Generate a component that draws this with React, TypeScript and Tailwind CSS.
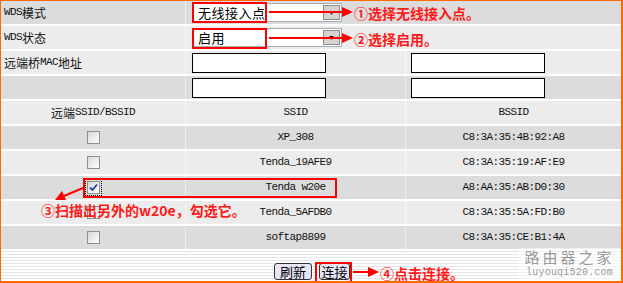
import React from 'react';

const cjk = 'font-["Noto_Sans_CJK_SC",sans-serif]';
const mono = 'font-["Liberation_Mono","Noto_Sans_CJK_SC",monospace]';

const Lat = ({ children }: { children: React.ReactNode }) => (
  <span className={`${mono} text-[11px] tracking-[-0.6px] text-[#111]`}>{children}</span>
);

const CheckBox = ({ checked }: { checked?: boolean }) => (
  <div className={checked ? 'outline-1 outline-dotted outline-black outline-offset-[1px]' : ''}>
    <div className="w-[13px] h-[13px] border border-[#8e8f8f] bg-gradient-to-br from-[#d8d8d8] to-white flex items-center justify-center">
      {checked && (
        <svg width="9" height="9" viewBox="0 0 9 9">
          <path d="M1 4.5 L3.5 7 L8 1.5" stroke="#21409a" strokeWidth="1.8" fill="none" />
        </svg>
      )}
    </div>
  </div>
);

const Select = ({ value }: { value: string }) => (
  <div className="w-[150px] h-[19px] border border-[#a5acb2] bg-white flex items-center justify-between">
    <span className={`${cjk} text-[13px] leading-none pl-[5px] tracking-[0.5px] text-black`}>{value}</span>
    <div className="w-[17px] h-[15px] mr-[1px] bg-[#d6d3ce] border border-[#8c8c8c] flex items-center justify-center">
      <span className="text-[7px] leading-none text-black">▼</span>
    </div>
  </div>
);

const Input = () => <div className="w-[134px] h-[20px] border border-black bg-white" />;

const rows = [
  { ssid: 'XP_308', bssid: 'C8:3A:35:4B:92:A8' },
  { ssid: 'Tenda_19AFE9', bssid: 'C8:3A:35:19:AF:E9' },
  { ssid: 'Tenda w20e', bssid: 'A8:AA:35:AB:D0:30', checked: true },
  { ssid: 'Tenda_5AFDB0', bssid: 'C8:3A:35:5A:FD:B0' },
  { ssid: 'softap8899', bssid: 'C8:3A:35:CE:B1:4A' },
];

const dark = 'bg-[#dcdcdc]';
const light = 'bg-[#ececec]';

export default function App() {
  return (
    <div className="relative w-[623px] h-[283px] overflow-hidden border-t border-l border-r-2 border-b-2 border-[#ff6a00] bg-white">
      <div className="flex flex-col h-full">
        <div className="flex flex-col gap-[2px]">
          {/* WDS settings */}
          <div className={`flex h-[23px] ${dark}`}>
            <div className="w-[185px] border-r border-dotted border-white flex items-center pl-[3px]">
              <Lat>WDS</Lat>
              <span className={`${cjk} text-[12px] text-[#111]`}>模式</span>
            </div>
            <div className="flex-1 flex items-center pl-[6px]">
              <Select value="无线接入点" />
            </div>
          </div>
          <div className={`flex h-[23px] ${light}`}>
            <div className="w-[185px] border-r border-dotted border-white flex items-center pl-[3px]">
              <Lat>WDS</Lat>
              <span className={`${cjk} text-[12px] text-[#111]`}>状态</span>
            </div>
            <div className="flex-1 flex items-center pl-[6px]">
              <Select value="启用" />
            </div>
          </div>
          <div className={`flex h-[23px] ${light}`}>
            <div className="w-[185px] border-r border-dotted border-white flex items-center pl-[3px]">
              <span className={`${cjk} text-[12px] text-[#111]`}>远端桥</span>
              <Lat>MAC</Lat>
              <span className={`${cjk} text-[12px] text-[#111]`}>地址</span>
            </div>
            <div className="w-[220px] border-r border-dotted border-white flex items-center pl-[6px]">
              <Input />
            </div>
            <div className="flex-1 flex items-center pl-[5px]">
              <Input />
            </div>
          </div>
          <div className={`flex h-[23px] ${dark}`}>
            <div className="w-[185px] border-r border-dotted border-white" />
            <div className="w-[220px] border-r border-dotted border-white flex items-center pl-[6px]">
              <Input />
            </div>
            <div className="flex-1 flex items-center pl-[5px]">
              <Input />
            </div>
          </div>

          {/* scan table */}
          <div className={`flex h-[23px] ${light}`}>
            <div className="w-[185px] border-r border-dotted border-white flex items-center justify-center">
              <span className={`${cjk} text-[12px] text-[#111]`}>远端</span>
              <Lat>SSID/BSSID</Lat>
            </div>
            <div className="w-[220px] border-r border-dotted border-white flex items-center justify-center">
              <Lat>SSID</Lat>
            </div>
            <div className="flex-1 flex items-center justify-center">
              <Lat>BSSID</Lat>
            </div>
          </div>
          {rows.map((r, i) => (
            <div key={r.bssid} className={`flex h-[23px] ${i % 2 === 0 ? dark : light}`}>
              <div className="w-[185px] border-r border-dotted border-white flex items-center justify-center">
                <CheckBox checked={r.checked} />
              </div>
              <div className="w-[220px] border-r border-dotted border-white flex items-center justify-center">
                <Lat>{r.ssid}</Lat>
              </div>
              <div className="flex-1 flex items-center justify-center">
                <Lat>{r.bssid}</Lat>
              </div>
            </div>
          ))}
        </div>

        {/* buttons */}
        <div className="flex-1 bg-[repeating-linear-gradient(to_bottom,#ffffff_0px,#ffffff_2px,#e4e4e4_2px,#e4e4e4_3px)] flex justify-center items-start pt-[14px] gap-[7px] pl-[2px]">
          <button className={`${cjk} h-[17px] w-[38px] rounded-[3px] border border-[#333] bg-[#e6e6f6] text-[13px] leading-none text-black`}>
            刷新
          </button>
          <button className={`${cjk} h-[17px] w-[31px] rounded-[3px] border border-[#333] bg-[#e6e6f6] text-[13px] leading-none text-black`}>
            连接
          </button>
        </div>
      </div>

      {/* annotations */}
      <div className="absolute left-[191px] top-[1px] w-[75px] h-[21px] border-2 border-[#ff0000]" />
      <div className="absolute left-[191px] top-[27px] w-[75px] h-[21px] border-2 border-[#ff0000]" />
      <div className="absolute left-[82px] top-[177px] w-[254px] h-[20px] border-2 border-[#ff0000]" />
      <div className="absolute left-[314px] top-[261px] w-[37px] h-[21px] border-2 border-[#ff0000]" />

      <svg className="absolute left-0 top-0" width="623" height="283" viewBox="0 0 623 283">
        <g stroke="#ff0000" strokeWidth="2" fill="#ff0000">
          <line x1="268" y1="11" x2="342" y2="11" />
          <polygon points="341,6 352,11 341,16" stroke="none" />
          <line x1="268" y1="37" x2="342" y2="37" />
          <polygon points="341,32 352,37 341,42" stroke="none" />
          <line x1="82" y1="187" x2="63" y2="195" />
          <polygon points="54,199 61,190 65,199" stroke="none" />
          <line x1="352" y1="271" x2="368" y2="271" />
          <polygon points="367,266 378,271 367,276" stroke="none" />
        </g>
      </svg>

      <div className={`${cjk} absolute left-[353px] top-[2px] text-[14px] font-bold leading-[20px] text-[#ff1a1a]`}>
        ①选择无线接入点。
      </div>
      <div className={`${cjk} absolute left-[353px] top-[28px] text-[14px] font-bold leading-[20px] text-[#ff1a1a]`}>
        ②选择启用。
      </div>
      <div className={`${cjk} absolute left-[40px] top-[199px] text-[14px] font-bold leading-[20px] text-[#ff1a1a]`}>
        ③扫描出另外的w20e，勾选它。
      </div>
      <div className={`${cjk} absolute left-[379px] top-[262px] text-[14px] font-bold leading-[20px] text-[#ff1a1a]`}>
        ④点击连接。
      </div>

      {/* watermark */}
      <div className="absolute left-[517px] top-[247px] w-[103px] h-[34px] bg-white/50 flex flex-col items-center gap-[2px]">
        <span className={`${cjk} text-[15px] leading-[17px] tracking-[3px] text-[#9a9a9a]`}>路由器之家</span>
        <span className={`${mono} text-[10px] leading-[12px] tracking-[0.2px] text-[#9a9a9a]`}>luyouqi520.com</span>
      </div>
    </div>
  );
}
